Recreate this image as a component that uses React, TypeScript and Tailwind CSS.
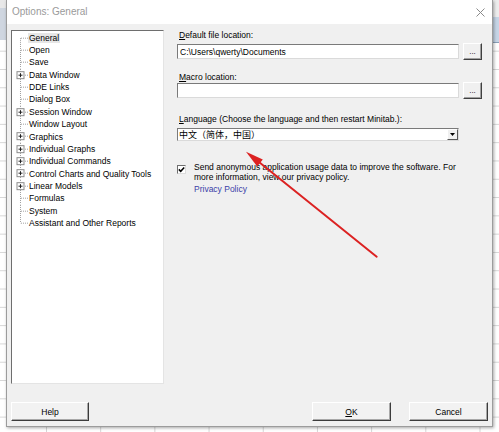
import React from "react";

const FONT = "font-['Liberation_Sans',Arial,sans-serif]";

type TreeItem = { label: string; plus?: boolean; selected?: boolean };

const TREE_ITEMS: TreeItem[] = [
  { label: "General", selected: true },
  { label: "Open" },
  { label: "Save" },
  { label: "Data Window", plus: true },
  { label: "DDE Links" },
  { label: "Dialog Box" },
  { label: "Session Window", plus: true },
  { label: "Window Layout" },
  { label: "Graphics", plus: true },
  { label: "Individual Graphs", plus: true },
  { label: "Individual Commands", plus: true },
  { label: "Control Charts and Quality Tools", plus: true },
  { label: "Linear Models", plus: true },
  { label: "Formulas" },
  { label: "System" },
  { label: "Assistant and Other Reports" },
];

function TreeRow({ item, first, last }: { item: TreeItem; first: boolean; last: boolean }) {
  const h = 12.37;
  const mid = h / 2;
  return (
    <div className="flex h-[12.37px] items-center">
      <svg width="16" height={h} className="shrink-0" viewBox={`0 0 16 ${h}`}>
        <line
          x1="8.5"
          x2="8.5"
          y1={first ? mid : 0}
          y2={last ? mid : h}
          stroke="#a0a0a0"
          strokeWidth="1"
          strokeDasharray="1 1"
        />
        <line x1="9" x2="16" y1={mid} y2={mid} stroke="#a0a0a0" strokeWidth="1" strokeDasharray="1 1" />
        {item.plus && (
          <g>
            <rect x="5" y={mid - 3.5} width="7" height="7" fill="#fff" stroke="#8c8c8c" strokeWidth="1" />
            <line x1="6.5" x2="10.5" y1={mid} y2={mid} stroke="#222" strokeWidth="1" />
            <line x1="8.5" x2="8.5" y1={mid - 2} y2={mid + 2} stroke="#222" strokeWidth="1" />
          </g>
        )}
      </svg>
      <span
        className={`px-[1px] text-[8.5px] leading-[10px] whitespace-nowrap text-black ${
          item.selected ? "bg-[#e6e6e6]" : ""
        }`}
      >
        {item.label}
      </span>
    </div>
  );
}

function DotsButton() {
  return (
    <button className="flex h-[17px] w-[19px] shrink-0 items-end justify-center border border-t-white border-l-white border-r-[#404040] border-b-[#404040] bg-[#f0f0f0] pb-[3px] text-[8px] leading-[8px] text-black shadow-[inset_-1px_-1px_0_#a0a0a0]">
      ...
    </button>
  );
}

function PathInput({ value }: { value?: string }) {
  return (
    <div className="flex h-[15px] w-[282px] items-center border border-t-[#7a7a7a] border-l-[#7a7a7a] border-r-[#dadada] border-b-[#dadada] bg-white pl-[2px] text-[8.5px] leading-[10px] text-black">
      {value}
    </div>
  );
}

function WinButton({ children, className = "" }: { children: React.ReactNode; className?: string }) {
  return (
    <button
      className={`flex h-[19px] items-center justify-center border border-t-white border-l-white border-r-[#3c3c3c] border-b-[#3c3c3c] bg-[#f2f2f2] text-[8.5px] leading-[10px] text-black shadow-[inset_-1px_-1px_0_#a8a8a8] ${className}`}
    >
      {children}
    </button>
  );
}

export default function App() {
  return (
    <div
      className={`relative h-[432px] w-[499px] overflow-hidden bg-white ${FONT} [background-image:linear-gradient(to_right,#d6d6d6_1px,transparent_1px),linear-gradient(to_bottom,#d6d6d6_1px,transparent_1px)] [background-size:54.2px_18.3px] [background-position:46px_14.1px]`}
    >
      {/* bits of the spreadsheet window behind */}
      <div className="absolute left-0 top-0 h-[8px] w-[8px] bg-[#e8e8e8]" />
      <div className="absolute left-0 top-[8px] h-[32px] w-[8px] bg-[#cfd6e0]" />
      <div className="absolute right-0 top-0 h-[17px] w-[8px] bg-[#ededed]" />
      <div className="absolute right-0 top-[17px] h-[26px] w-[8px] border-b border-[#8aa0b8] bg-[#c6d5e6]" />

      {/* Dialog window */}
      <div className="absolute left-[6px] top-0 flex h-[427px] w-[487px] flex-col border-x border-b border-[#9c9c9c] bg-[#f0f0f0] shadow-[1px_1px_3px_rgba(0,0,0,0.35)]">
        {/* Title bar */}
        <div className="flex h-[24px] shrink-0 items-center justify-between bg-white pl-[5px] pr-[7px]">
          <span className="text-[10px] leading-[12px] text-[#9a9a9a]">Options: General</span>
          <svg width="9" height="9" viewBox="0 0 9 9">
            <path d="M0.5 0.5 L8.5 8.5 M8.5 0.5 L0.5 8.5" stroke="#8a8a8a" strokeWidth="1" />
          </svg>
        </div>

        {/* Body */}
        <div className="flex flex-1 flex-col">
          <div className="flex">
            {/* Tree */}
            <div className="ml-[4px] mt-[6px] h-[354px] w-[153px] shrink-0 border border-t-[#6e6e6e] border-l-[#6e6e6e] border-r-[#e4e4e4] border-b-[#e4e4e4] bg-white pt-[0.5px]">
              {TREE_ITEMS.map((item, i) => (
                <TreeRow key={item.label} item={item} first={i === 0} last={i === TREE_ITEMS.length - 1} />
              ))}
            </div>

            {/* Settings */}
            <div className="ml-[13px] mt-[6px] flex w-[305px] flex-col text-[8.5px] leading-[10px] text-black">
              <div className="pl-[2px]">
                <u>D</u>efault file location:
              </div>
              <div className="mt-[3px] flex h-[17px] items-center justify-between">
                <PathInput value="C:\Users\qwerty\Documents" />
                <DotsButton />
              </div>

              <div className="mt-[12px] pl-[2px]">
                <u>M</u>acro location:
              </div>
              <div className="flex h-[17px] items-center justify-between">
                <PathInput />
                <DotsButton />
              </div>

              <div className="mt-[15px] pl-[2px]">
                <u>L</u>anguage (Choose the language and then restart Minitab.):
              </div>
              <div className="mt-[4px] flex h-[13px] w-[282px] items-center border border-t-[#7a7a7a] border-l-[#7a7a7a] border-r-[#dadada] border-b-[#dadada] bg-white">
                <span className="flex-1 pl-[1px] font-['Noto_Sans_CJK_SC',sans-serif] text-[9px] leading-[11px] text-black">
                  中文（简体，中国）
                </span>
                <div className="flex h-full w-[11px] items-center justify-center border border-t-white border-l-white border-r-[#555] border-b-[#555] bg-[#f0f0f0]">
                  <svg width="5" height="3" viewBox="0 0 5 3">
                    <path d="M0 0 H5 L2.5 3 Z" fill="#000" />
                  </svg>
                </div>
              </div>

              <div className="mt-[21px] flex">
                <div className="mt-[3px] flex h-[9px] w-[9px] shrink-0 items-center justify-center border border-t-[#6e6e6e] border-l-[#6e6e6e] border-r-[#dcdcdc] border-b-[#dcdcdc] bg-white">
                  <svg width="7" height="7" viewBox="0 0 7 7">
                    <path d="M0.8 3.4 L2.7 5.3 L6.2 1.4" stroke="#000" strokeWidth="1.5" fill="none" />
                  </svg>
                </div>
                <div className="ml-[8px] flex flex-col">
                  <p className="whitespace-nowrap">
                    Send anonymous application usage data to improve the software. For
                    <br />
                    more information, view our privacy policy.
                  </p>
                  <span className="mt-[2px] text-[#3a40a8]">Privacy Policy</span>
                </div>
              </div>
            </div>
          </div>

          {/* Buttons */}
          <div className="mb-[5px] mt-auto flex">
            <WinButton className="ml-[4px] w-[78px]">Help</WinButton>
            <WinButton className="ml-auto w-[79px]">
              <span>
                <u>O</u>K
              </span>
            </WinButton>
            <WinButton className="ml-[18px] mr-[4px] w-[79px]">Cancel</WinButton>
          </div>
        </div>
      </div>

      {/* Red annotation arrow */}
      <svg className="pointer-events-none absolute left-0 top-0" width="499" height="432" viewBox="0 0 499 432">
        <line x1="376.7" y1="256.7" x2="258" y2="161.3" stroke="#dc2222" strokeWidth="2" strokeLinecap="round" />
        <path d="M246 151.7 L257.2 166.5 L262.8 159.5 Z" fill="#dc2222" />
      </svg>
    </div>
  );
}
